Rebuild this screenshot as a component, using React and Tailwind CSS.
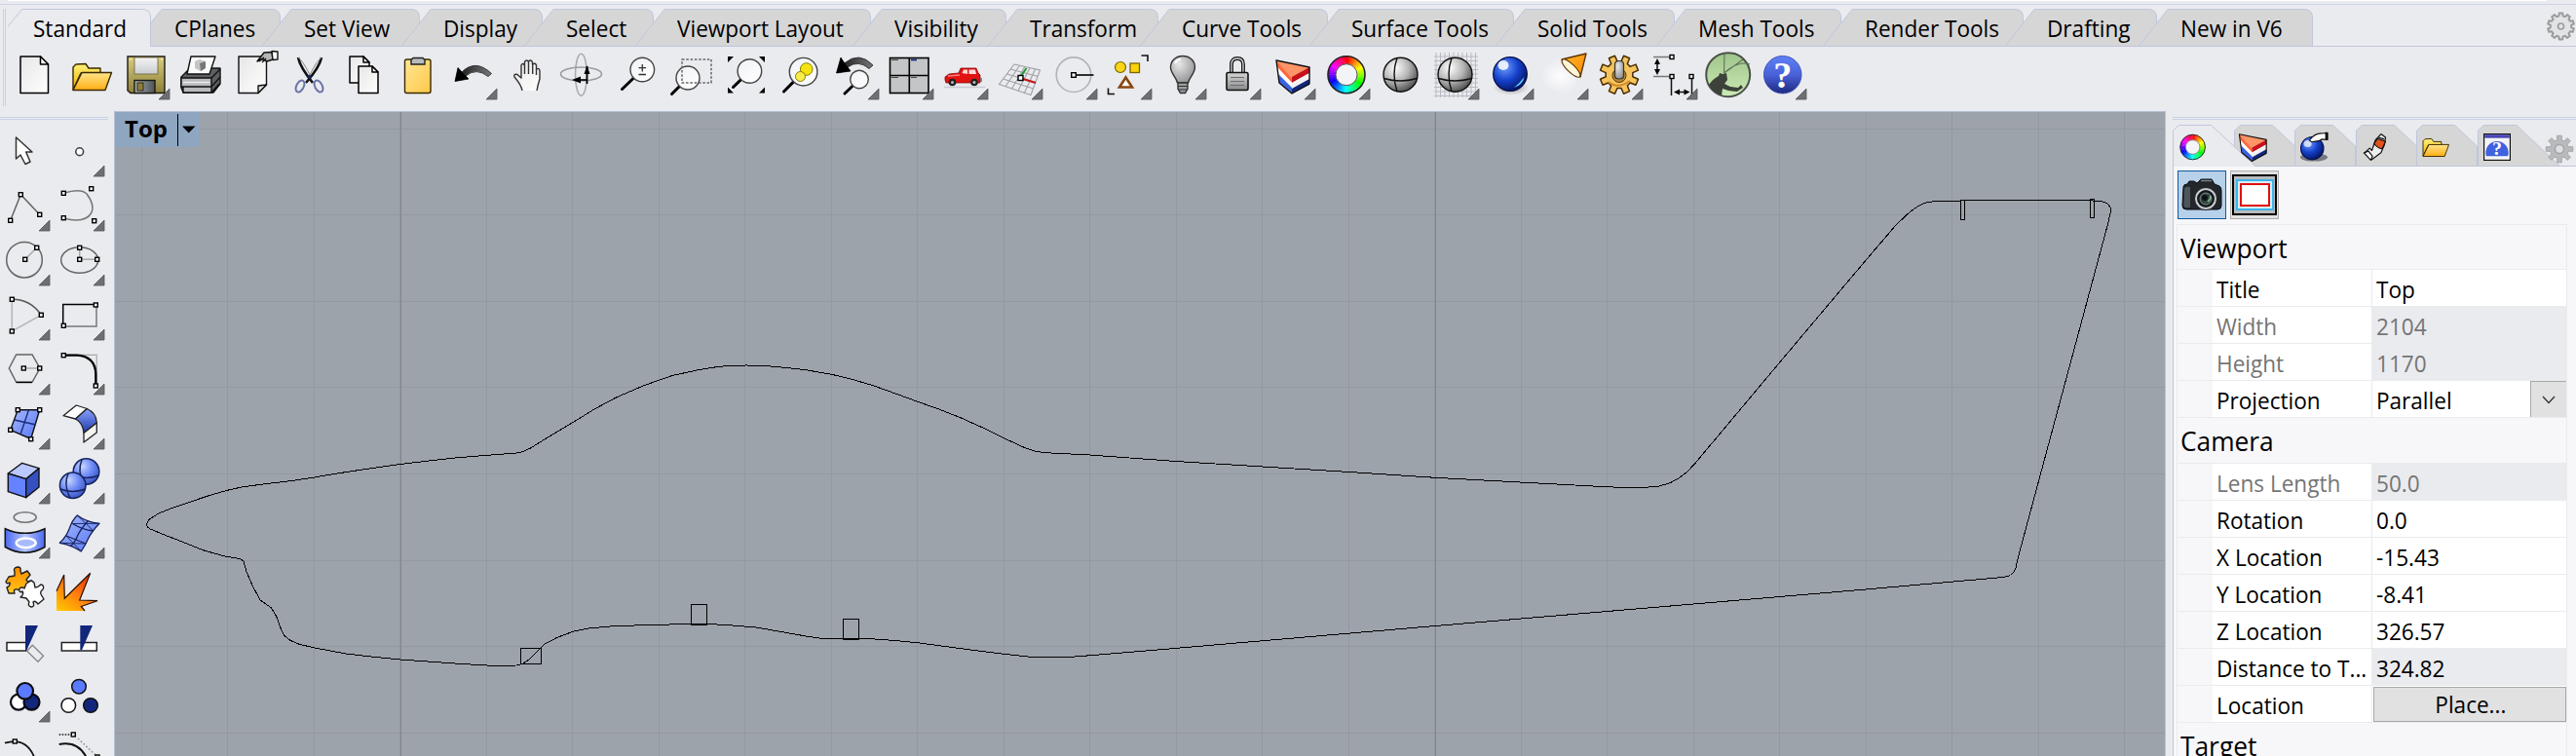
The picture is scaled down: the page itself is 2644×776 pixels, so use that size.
import React from "react";

/* ---------- shared drawing helpers ---------- */
const Sq = ({ x, y, s = 4 }) => (
  <rect x={x - s / 2} y={y - s / 2} width={s} height={s} fill="#fff" stroke="#000" strokeWidth="1.4" />
);

const Corner = () => <path d="M48 37V48H37Z" fill="#6f6f72" stroke="#55555a" strokeWidth=".8" />;

function Icon({ children, menu, className = "size-12" }) {
  return (
    <svg viewBox="0 0 48 48" className={`${className} shrink-0 overflow-visible`} fill="none">
      {children}
      {menu && <Corner />}
    </svg>
  );
}

function Wheel({ cx = 24, cy = 22.7, ro = 19, ri = 11 }) {
  const n = 48;
  const segs = [];
  for (let i = 0; i < n; i++) {
    const a = (i / n) * Math.PI * 2 - Math.PI / 2;
    const b = ((i + 1.15) / n) * Math.PI * 2 - Math.PI / 2;
    const p = (r, t) => `${cx + r * Math.cos(t)} ${cy + r * Math.sin(t)}`;
    segs.push(
      <path key={i} d={`M${p(ro, a)}L${p(ro, b)}L${p(ri, b)}L${p(ri, a)}Z`} fill={`hsl(${(i / n) * 360} 100% 50%)`} />
    );
  }
  return (
    <g>
      {segs}
      <circle cx={cx} cy={cy} r={ro} stroke="#222" strokeWidth="1.6" />
      <circle cx={cx} cy={cy} r={ri} fill="#f3f4f7" stroke="#555" strokeWidth="1" />
    </g>
  );
}

const Folder = () => (
  <g stroke="#3a2a00" strokeWidth="1.4" strokeLinejoin="round">
    <path d="M5 38V15L8 12L18 11.5L21 16H33V21H13Z" fill="url(#yel)" />
    <path d="M5 38.5L14 20.5H44.5L38 38.5Z" fill="url(#org)" />
  </g>
);

const Slab = () => (
  <g strokeLinejoin="round">
    <path d="M8 8L42 15L24 26Z" fill="#ff9466" />
    <path d="M8 8L24 26V31L9 15Z" fill="#ff6a3c" />
    <path d="M42 15L24 25V31L42 21Z" fill="#c8101c" />
    <path d="M9 15L24 31V36L10 22Z" fill="#fff" />
    <path d="M42 21L24 31V37L42 27Z" fill="#f2f2f2" />
    <path d="M10 22L24 36V42L11 31Z" fill="#3a63e0" />
    <path d="M42 27L24 37V42L42 33Z" fill="#12277c" />
    <path d="M8 8L42 15V32L24 42L11 31Z" stroke="#111" strokeWidth="1.4" />
  </g>
);

const Lens = ({ cx, cy, r, hx, hy }) => {
  const d = Math.hypot(hx - cx, hy - cy);
  const sx = cx + ((hx - cx) / d) * r;
  const sy = cy + ((hy - cy) / d) * r;
  return (
    <g>
      <path d={`M${sx} ${sy}L${hx} ${hy}`} stroke="#000" strokeWidth="3" strokeLinecap="round" />
      <circle cx={cx} cy={cy} r={r} fill="url(#glass)" stroke="#444" strokeWidth="1.4" />
    </g>
  );
};

const Page = ({ x, y, w, h, f = 8 }) => (
  <g stroke="#000" strokeWidth="1.5" strokeLinejoin="round">
    <path d={`M${x} ${y}H${x + w - f}L${x + w} ${y + f}V${y + h}H${x}Z`} fill="url(#paper)" />
    <path d={`M${x + w - f} ${y}V${y + f}H${x + w}Z`} fill="#fff" />
  </g>
);

const GreySphere = () => (
  <g stroke="#111" strokeWidth="1.4">
    <circle cx="23.5" cy="22.7" r="17.5" fill="url(#gsph)" />
    <path d="M6.500 26.500Q23 31.500 40.500 26.500M20 5.500Q14 22 20 40" />
  </g>
);

function gearPath(cx, cy, ro, ri, n) {
  let d = "";
  for (let i = 0; i < n; i++) {
    const c = (i / n) * Math.PI * 2 - Math.PI / 2;
    const st = Math.PI / n;
    [[ri, -0.62], [ro, -0.42], [ro, 0.42], [ri, 0.62]].forEach(([r, o], j) => {
      d += `${i === 0 && j === 0 ? "M" : "L"}${(cx + r * Math.cos(c + o * st)).toFixed(2)} ${(cy + r * Math.sin(c + o * st)).toFixed(2)}`;
    });
  }
  return d + "Z";
}

/* ---------- main toolbar ---------- */
const toolbar = [
  [<Page x={7} y={4} w={28.5} h={37.5} />, false],
  [<Folder />, false],
  [
    <g stroke="#1c1a10" strokeWidth="1.4">
      <path d="M5 4H43V41.500H8L5 39Z" fill="url(#olive)" />
      <rect x="12" y="5" width="24" height="17" fill="url(#steel)" strokeWidth=".8" stroke="#6b6330" />
      <rect x="12" y="28.500" width="21" height="13" fill="url(#steel2)" />
      <rect x="15" y="31" width="6" height="8" fill="#8c7f3c" strokeWidth=".8" />
      <path d="M7 7h2M39 7h2" stroke="#ffe98a" />
    </g>,
    true,
  ],
  [
    <g stroke="#111" strokeWidth="1.4" strokeLinejoin="round">
      <path d="M4 25L13 16H44V32L37 41H6L4 36Z" fill="#5d5f62" />
      <path d="M14 4L39 4L33 22L10 22Z" fill="#fafafa" />
      <path d="M18 9l5-2 6 2v7l-5 3-6-3z" fill="#c4c4c4" stroke="none" />
      <path d="M23 11l6-2v7l-5 3z" fill="#777" stroke="none" />
      <path d="M4 26H35V35H4ZM6 35H35V41H6Z" fill="#b9bbbd" />
      <path d="M35 26L44 17M35 35L44 25M35 41L43 32" />
      <path d="M6 30.500H33" stroke="#eee" />
    </g>,
    false,
  ],
  [
    <g stroke="#111" strokeWidth="1.4" strokeLinejoin="round">
      <path d="M7 4H35.500V33L27 41.500H7Z" fill="url(#paper)" />
      <path d="M27 41.500V34L35.500 33Z" fill="#ddd" />
      <path d="M26 9L33 0L41 -.5L42 7L36 9L31 6.500Z" fill="#b5b5b5" />
      <path d="M28 9l5-4M31 10l4-4" />
      <path d="M41 -1.500L47 -1V7L42 7.500Z" fill="#fff" />
    </g>,
    false,
  ],
  [
    <g>
      <path d="M12 5Q14 15 27 31M36 5Q34 15 20 31" stroke="#111" strokeWidth="2.600" />
      <path d="M12 5Q18 10 24 23M36 5Q30 10 24 23" stroke="#888" strokeWidth="1" />
      <ellipse cx="14" cy="34.500" rx="3.700" ry="6.500" transform="rotate(28 14 34.500)" stroke="#6c74a8" strokeWidth="2" />
      <ellipse cx="33" cy="34.500" rx="3.700" ry="6.500" transform="rotate(-28 33 34.500)" stroke="#6c74a8" strokeWidth="2" />
      <circle cx="23.500" cy="25" r="2" fill="#17245c" />
    </g>,
    false,
  ],
  [
    <g>
      <Page x={9} y={4} w={20} h={27} f={6} />
      <Page x={18} y={14} w={20} h={27.5} f={6} />
    </g>,
    false,
  ],
  [
    <g stroke="#3a2a00" strokeWidth="1.400">
      <rect x="9.500" y="7" width="26.500" height="34.500" rx="2" fill="url(#clip)" />
      <path d="M16 12V7.500L18 5.500H28L30 7.500V12Z" fill="#b9babd" stroke="#222" />
    </g>,
    false,
  ],
  [
    <g>
      <path d="M5 29.500L8 15.500L12 20Q26 6 42.500 21.500L39 24.500Q27 15 16 24L19 27Z" fill="url(#arw)" stroke="#222" strokeWidth=".8" />
      <path d="M5 29.500L8 15.500L19 27Z" fill="#000" />
    </g>,
    true,
  ],
  [
    <path
      d="M18 39Q17 33 10 25Q9 21.500 13 22.500L17 26V13Q18.500 10 20.500 13V9.500Q22.500 6.500 24.500 9.500V9Q27 6.500 28.500 10V12Q31.500 10 32.500 13V17Q35.500 15 36 19V27Q34 33 33 39"
      fill="url(#paper)"
      stroke="#333"
      strokeWidth="1.400"
      strokeLinejoin="round"
    />,
    false,
    <path d="M20.500 13V22M24.500 10V22M28.700 12V22M32.500 17V23" stroke="#333" strokeWidth="1.400" />,
  ],
  [
    <g>
      <ellipse cx="22.500" cy="22.700" rx="6" ry="21.500" stroke="#a9abb0" strokeWidth="1.600" />
      <ellipse cx="22.500" cy="22" rx="21" ry="7" stroke="#9a9ca0" strokeWidth="1.600" />
      <path d="M28.500 14V32" stroke="#000" strokeWidth="1.800" />
      <path d="M28.500 13L31.500 22H25.500ZM13 28L22 24.500V31.500Z" fill="#000" />
      <path d="M20 28H28" stroke="#000" strokeWidth="1.600" />
    </g>,
    false,
  ],
  [
    <g>
      <Lens cx={29.3} cy={17.5} r={12.3} hx={8.5} hy={37.5} />
      <path d="M29.300 12V19.500M25.500 15.700H33M25.500 22.500H33" stroke="#333" strokeWidth="1.300" />
    </g>,
    false,
  ],
  [
    <g>
      <Lens cx={20} cy={26} r={12} hx={3.5} hy={42.5} />
      <rect x="14" y="7" width="30" height="24" stroke="#666" strokeWidth="1.500" strokeDasharray="2.500 1.800" />
    </g>,
    false,
  ],
  [
    <g>
      <Lens cx={27.4} cy={19} r={12.3} hx={10.5} hy={35.5} />
      <path d="M5 4H11L5 10ZM43 4H37L43 10ZM5 41.500V35.500L11 41.500ZM43 41.500V35.500L37 41.500Z" fill="#000" />
    </g>,
    false,
  ],
  [
    <g>
      <Lens cx={26.6} cy={19.7} r={14.3} hx={6.5} hy={40} />
      <circle cx="29.700" cy="17" r="6.300" fill="#f3e410" stroke="#8a7d00" />
      <circle cx="23.500" cy="24.500" r="5" fill="#f7ee4a" stroke="#8a7d00" />
    </g>,
    false,
  ],
  [
    <g>
      <path d="M4.500 21L9 5L12.500 11Q28 -2 42 13L38 16.500Q27 7 16 15L19 19Z" fill="url(#arw)" stroke="#222" strokeWidth=".8" />
      <path d="M4.500 21L9 5L19 19Z" fill="#000" />
      <Lens cx={28} cy={27.5} r={9.3} hx={13} hy={42} />
    </g>,
    true,
  ],
  [
    <g stroke="#000" strokeWidth="1.600">
      <rect x="3.500" y="5.500" width="39.500" height="36" fill="#c4c5c7" />
      <path d="M23.300 5V42M3 23.500H43" />
      <path d="M5 7.500H12M5 25.500H12M25 25.500H31" strokeWidth="1.200" stroke="#444" />
      <path d="M25 7.500H31" stroke="#10207c" />
    </g>,
    true,
  ],
  [
    <g>
      <path d="M3 35.500H45" stroke="#c9cacd" strokeWidth="1.600" />
      <path d="M4 28V25L8 22L18 21L20 16H36L38 21L40 23V31H5Z" fill="#e01212" stroke="#8c0505" strokeWidth=".8" />
      <path d="M21.500 21L23 17.500H27V22ZM28.500 17.500H35L36 22H28.500Z" fill="#ffd9d9" />
      <path d="M7 24L19 23" stroke="#ff8080" strokeWidth="1.400" />
      <circle cx="11.500" cy="30.500" r="3.800" fill="#222" />
      <circle cx="11.500" cy="30.500" r="1.500" fill="#bbb" />
      <circle cx="34" cy="30.500" r="3.800" fill="#222" />
      <circle cx="34" cy="30.500" r="1.500" fill="#bbb" />
      <path d="M41 26V30" stroke="#666" strokeWidth="1.500" />
    </g>,
    true,
  ],
  [
    <g>
      <g stroke="#a0a1a5" strokeWidth="1.100">
        <path d="M19 12L45.500 18L36 43.500L3.500 32.500ZM15 17L43.500 24.500M11.500 22L41 30.500M7.500 27L38.700 37" />
        <path d="M24.500 13.200L10 34.700M29.800 14.500L16.500 37M35 15.700L23 39M40.500 17L29.500 41.200" />
      </g>
      <path d="M26 24L31.500 16" stroke="#159a2c" strokeWidth="2" />
      <path d="M28 27L41 31" stroke="#c21515" strokeWidth="2" />
      <Sq x={25.5} y={26} s={5} />
    </g>,
    true,
  ],
  [
    <g>
      <circle cx="24" cy="22.700" r="17.800" stroke="#b3b4b8" strokeWidth="1.600" />
      <path d="M24 23H44.500" stroke="#000" strokeWidth="1.600" />
      <Sq x={24} y={23} s={4.6} />
    </g>,
    true,
  ],
  [
    <g>
      <circle cx="16" cy="15" r="5.500" fill="#f9d616" stroke="#7a6400" strokeWidth="1.200" />
      <rect x="26" y="11" width="9.500" height="9.500" fill="#fbd20b" stroke="#7a6400" strokeWidth="1.300" />
      <path d="M21.500 25.500L28 35.500H15Z" stroke="#8a4610" strokeWidth="2.600" fill="#fff" />
      <path d="M37.500 3H44V9M3.500 36.500V42.500H10" stroke="#111" strokeWidth="1.600" />
    </g>,
    true,
  ],
  [
    <g stroke="#333" strokeWidth="1.400">
      <path d="M24 3.500C31 3.500 36.500 8.500 36.500 15C36.500 21 31 25 29.500 31H18.500C17 25 11.500 21 11.500 15C11.500 8.500 17 3.500 24 3.500Z" fill="url(#bulb)" />
      <path d="M19 31H29V37L26.500 41.500H21.500L19 37Z" fill="#9b9c9f" />
      <path d="M19 34.500H29M19.500 38H28.500" strokeWidth="1" />
      <path d="M16 11Q18 7 22 7" stroke="#fff" strokeWidth="2" />
    </g>,
    true,
  ],
  [
    <g stroke="#111" strokeWidth="1.600">
      <path d="M18 20V12Q18 6 24 6T30 12V20" strokeWidth="3.800" />
      <path d="M18 20V12Q18 6 24 6T30 12V20" stroke="#ddd" strokeWidth="1.300" />
      <rect x="13" y="20.500" width="22" height="18" rx="1.500" fill="url(#lockg)" />
      <path d="M17 25.500H31M17 29.500H31M17 33.500H31" stroke="#6b6c70" strokeWidth="1.200" />
    </g>,
    true,
  ],
  [<Slab />, true],
  [<Wheel />, true],
  [<GreySphere />, false],
  [
    <g>
      <path
        d="M2 4H47M2 8.500H47M2 13H47M2 17.500H47M2 22H47M2 26.500H47M2 31H47M2 35.500H47M2 40H47M2 44.500H47M4 0V46M8.500 0V46M13 0V46M17.500 0V46M22 0V46M26.500 0V46M31 0V46M35.500 0V46M40 0V46M44.500 0V46"
        stroke="#b9bac0"
        strokeWidth="1"
      />
      <GreySphere />
    </g>,
    true,
  ],
  [
    <g>
      <ellipse cx="25" cy="36" rx="19" ry="8" fill="url(#shade)" />
      <circle cx="24" cy="22" r="17.300" fill="url(#bsph)" stroke="#06104a" strokeWidth="1.300" />
      <ellipse cx="17" cy="13" rx="5.500" ry="5" fill="#fff" opacity=".85" />
      <path d="M28 36Q37 33 38.500 25Q34 31 28 36Z" fill="#5cd0ff" />
    </g>,
    true,
  ],
  [
    <g>
      <ellipse cx="20" cy="24" rx="20" ry="18" fill="url(#glow)" />
      <path d="M21 7L46 1L40 25Z" fill="url(#cone)" stroke="#5a3200" strokeWidth="1.300" strokeLinejoin="round" />
      <ellipse cx="30.500" cy="16" rx="12.500" ry="4" transform="rotate(44 30.500 16)" fill="#fff6d8" stroke="#5a3200" strokeWidth="1.100" />
    </g>,
    true,
  ],
  [
    <g>
      <path d={gearPath(24, 22.7, 20, 14, 8)} transform="rotate(22.5 24 22.7)" fill="#f5c45c" stroke="#4a2c00" strokeWidth="1.500" strokeLinejoin="round" />
      <path d="M13 30Q22 38 35 29" stroke="#cf8a2a" strokeWidth="2" />
      <circle cx="24" cy="23.500" r="7" fill="#b7873a" stroke="#5a3a00" />
      <path d="M19.500 12Q19.500 8.500 24 8.500T28.500 12V24Q28.500 27 24 27T19.500 24Z" fill="url(#bulb)" stroke="#333" strokeWidth="1.200" />
    </g>,
    true,
  ],
  [
    <g stroke="#111" strokeWidth="1.500">
      <path d="M3 4.500H20M3 24.500H20" stroke="#777" />
      <path d="M7 9V20M21.500 27V44M42.500 27V44M27 40.500H37" />
      <path d="M7 6L10 12H4ZM7 23L10 17H4ZM24 40.500L30 37.500V43.500ZM40.500 40.500L34.500 37.500V43.500Z" fill="#000" stroke="none" />
      <Sq x={22} y={4.5} />
      <Sq x={22} y={24.5} />
      <Sq x={42} y={24.5} />
    </g>,
    true,
  ],
  [
    <g>
      <circle cx="23.700" cy="22.700" r="22.500" fill="url(#green)" stroke="#4b5148" strokeWidth="2" />
      <path d="M20 .5L19.500 21M19.500 21Q34 8 46 12M19.500 21L39 7" stroke="#5d7157" strokeWidth="1.100" />
      <path d="M4 33Q8 27 14 24L15 21L18 22L22 21L23 28L20 32L26 35L34 36L37 33L39 36L33 40L24 39L18 37L17 44Q8 41 4 33Z" fill="#3c423a" />
    </g>,
    false,
  ],
  [
    <g>
      <circle cx="23.700" cy="22.700" r="19.300" fill="url(#help)" stroke="#3346ae" strokeWidth=".8" />
      <text x="23.700" y="35.500" textAnchor="middle" fontFamily="Liberation Serif, serif" fontWeight="700" fontSize="38" fill="#fff">?</text>
    </g>,
    true,
  ],
];

/* ---------- side toolbar ---------- */
const side = [
  [<path d="M13.500 8L30 23H23.700L28 33L23 35.500L18 26L13.500 30Z" fill="#fff" stroke="#333" strokeWidth="1.500" strokeLinejoin="round" />, false],
  [<circle cx="22.700" cy="22.700" r="3.900" stroke="#444" strokeWidth="1.600" fill="#fff" />, true],
  [
    <g>
      <path d="M7.700 37.300L18.300 10.700L37.700 31.300" stroke="#666" strokeWidth="1.500" />
      <Sq x={7.7} y={37.3} /><Sq x={18.3} y={10.7} /><Sq x={37.7} y={31.3} />
    </g>,
    true,
  ],
  [
    <g>
      <path d="M6.300 9.300Q24 4 30 10Q39 22 34.500 30Q28 40.500 6.300 35" stroke="#777" strokeWidth="1.500" />
      <Sq x={6.3} y={9.3} /><Sq x={34.7} y={4.7} /><Sq x={37.7} y={37.7} /><Sq x={6.3} y={34.7} />
    </g>,
    true,
  ],
  [
    <g>
      <circle cx="22" cy="21.700" r="18.300" stroke="#666" strokeWidth="1.500" />
      <path d="M22.700 21.300L34.700 9.300" stroke="#aaa" strokeWidth="1.500" />
      <Sq x={22.7} y={21.3} /><Sq x={34.7} y={9.3} />
    </g>,
    true,
  ],
  [
    <g>
      <ellipse cx="22.700" cy="22" rx="19" ry="13.300" stroke="#666" strokeWidth="1.500" />
      <path d="M22.700 9.300V21.300H40.700" stroke="#aaa" strokeWidth="1.500" />
      <Sq x={22.7} y={21.3} /><Sq x={22.7} y={9.3} /><Sq x={40.7} y={21.3} />
    </g>,
    true,
  ],
  [
    <g>
      <path d="M9.300 6.300V39L39.300 22.300" stroke="#b5b5b8" strokeWidth="1.500" />
      <path d="M9.300 6.300Q28 6 39.300 22.300" stroke="#555" strokeWidth="1.500" />
      <Sq x={9.3} y={6.3} /><Sq x={9.3} y={39} /><Sq x={39.3} y={22.3} />
    </g>,
    true,
  ],
  [
    <g>
      <path d="M5.700 33V11.500H39" stroke="#000" strokeWidth="1.500" />
      <path d="M6 34H40V12" stroke="#77777c" strokeWidth="1.500" />
      <Sq x={39.3} y={12} /><Sq x={6.3} y={33.3} />
    </g>,
    true,
  ],
  [
    <g>
      <path d="M6.300 21L13.700 7H30L38 21L30 35.300H13.700Z" stroke="#666" strokeWidth="1.500" />
      <path d="M13.700 35.500H30" stroke="#000" strokeWidth="1.400" />
      <path d="M21.300 21H37.700" stroke="#aaa" strokeWidth="1.500" />
      <Sq x={21.3} y={21} /><Sq x={37.7} y={21} />
    </g>,
    true,
  ],
  [
    <g>
      <path d="M6.300 7.300H40.300V39" stroke="#aaa" strokeWidth="1.200" />
      <path d="M6.300 7.700H20Q39 9 39.300 27V39" stroke="#000" strokeWidth="2.300" />
      <Sq x={6.3} y={7.7} /><Sq x={39.3} y={39} />
    </g>,
    true,
  ],
  [
    <g>
      <path d="M15.300 7.700H37.700L28.700 37.500L7.700 28.300Z" fill="url(#blue)" stroke="#111" strokeWidth="1.400" />
      <path d="M26.500 7.700L18 33M11.500 18L34 23" stroke="#1c2c7c" strokeWidth="1.400" />
      <Sq x={15.3} y={7.7} /><Sq x={37.7} y={7.7} /><Sq x={28.7} y={37.7} /><Sq x={7.7} y={28.3} />
    </g>,
    true,
  ],
  [
    <g stroke="#222" strokeWidth="1.300" strokeLinejoin="round">
      <path d="M6 13.700L19.300 3L30.300 6.500L18.500 17Z" fill="#fff" />
      <path d="M30.300 6.500Q40 11 40.300 21L27 31.500Q26 21 18.500 17Z" fill="url(#blue2)" />
      <path d="M40.300 21V31L27 41V31.500Z" fill="#f3f3f0" />
    </g>,
    true,
  ],
  [
    <g stroke="#111" strokeWidth="1.400" strokeLinejoin="round">
      <path d="M19.700 6.300L37 11.700L23.700 22.700L5.300 17Z" fill="#b9c8ff" />
      <path d="M5.300 17L23.700 22.700V41.700L5.300 35.700Z" fill="#6582ff" />
      <path d="M37 11.700V31L23.700 41.700V22.700Z" fill="#3550c0" />
    </g>,
    true,
  ],
  [
    <g stroke="#15245e" strokeWidth="1.500">
      <circle cx="29.500" cy="15" r="13.300" fill="url(#sph)" />
      <path d="M17 19Q30 24 42.500 19M25 3Q20 15 27 28" />
      <circle cx="15.700" cy="29.300" r="13.300" fill="url(#sph)" />
      <path d="M3 33Q15 38 28.500 33M11 17Q6 29 13 42" />
    </g>,
    true,
  ],
  [
    <g>
      <ellipse cx="22.700" cy="6" rx="11.500" ry="5.300" stroke="#777" strokeWidth="1.600" />
      <path d="M2.300 17.700Q22.700 27 43 17.700V36.500Q22.700 48 2.300 36.500Z" fill="url(#band)" stroke="#111" strokeWidth="1.500" />
      <ellipse cx="23.700" cy="32.300" rx="10" ry="4.800" fill="#a8bbff" stroke="#fff" strokeWidth="2.400" />
    </g>,
    true,
  ],
  [
    <g stroke="#16225e" strokeWidth="1.300" strokeLinejoin="round">
      <path d="M20.300 4Q30 11 43 12.300Q35 21 32 27Q29 34 24.300 41Q14 34 2.300 32.300Q9 26 12 18Q15 9 20.300 4Z" fill="url(#blue)" />
      <path d="M31.500 9.500Q24 18 21 24Q18 32 13 36M15.500 12.500Q26 19 37 20M9 25Q19 29 29 33" />
      <path d="M20.300 4L37 20M15.500 12.500L43 12.300M9 25L24.300 41M2.300 32.300L29 33" strokeWidth=".9" />
    </g>,
    true,
  ],
  [
    <g strokeWidth="1.400" stroke="#222" strokeLinejoin="round">
      <path
        d="M12 6Q10 2 15 1Q19 1 18 5L19 8L25 5L28 9L24 14Q25 17 28 15Q32 15 31 19Q29 22 26 20L23 22L20 27L15 24Q10 23 12 28L6 28L4 22Q8 20 7 17Q4 19 3 16L6 11L12 10Z"
        fill="url(#org2)"
      />
      <path
        d="M24 18L29 15L32 17L33 22Q36 22 39 19Q43 20 41 24Q38 26 39 29L42 34L36 39Q33 35 31 37Q33 42 29 42Q25 41 27 37L24 33L18 32Q22 29 20 26Q16 28 17 23Q20 21 22 23Z"
        fill="#fff"
      />
    </g>,
    false,
  ],
  [<path d="M-1 46V25.700L6.700 9L7.300 33.300L33.700 7.300L22.700 35L41 35.700L24.300 41.500L28 46Z" fill="url(#fire)" />, false,
    <path d="M-1 25.700L6.700 9L7.300 33.300L33.700 7.300L22.700 35L41 35.700L24.300 41.500L28 46" stroke="#2a1200" strokeWidth="1.200" />],
  [
    <g>
      <rect x="4" y="22.500" width="20" height="8.500" fill="#fff" stroke="#222" strokeWidth="1.500" />
      <path d="M23 5H36L24.500 30H23Z" fill="#12277c" />
      <path d="M30.300 25.300L41.500 36.300L36 42.300L24.700 31.300Z" stroke="#888" strokeWidth="1.400" fill="#eaebef" />
    </g>,
    false,
  ],
  [
    <g>
      <rect x="4.300" y="22.500" width="36" height="8.500" fill="#fff" stroke="#222" strokeWidth="1.500" />
      <path d="M23.300 5H36L25 30.300H23.300Z" fill="#12277c" />
    </g>,
    false,
  ],
  [
    <g stroke="#0a0a14" strokeWidth="2.200">
      <circle cx="16" cy="27.700" r="8" fill="#fff" />
      <circle cx="29.500" cy="27.700" r="8" fill="#12277c" />
      <circle cx="22.700" cy="16.300" r="8.300" fill="#5a7aff" />
    </g>,
    true,
  ],
  [
    <g stroke="#111" strokeWidth="1.500">
      <circle cx="22" cy="11.700" r="7.300" fill="#5a7aff" />
      <circle cx="11.300" cy="31" r="7.300" fill="#fff" />
      <circle cx="34" cy="31" r="7.300" fill="#12277c" />
    </g>,
    false,
  ],
  [
    <g>
      <path d="M2 13.700Q24 7 32.500 29" stroke="#111" strokeWidth="1.800" />
      <Sq x={12.3} y={12} />
    </g>,
    false,
  ],
  [
    <g>
      <path d="M1.700 15Q21 11 30 29" stroke="#111" strokeWidth="2" />
      <path d="M1.700 5H14" stroke="#111" strokeWidth="1.500" strokeDasharray="1.500 1.500" />
      <path d="M21 9L39 26" stroke="#999" strokeWidth="1.600" strokeDasharray="1.800 2" />
      <Sq x={16.3} y={5} /><Sq x={41} y={28} />
    </g>,
    false,
  ],
];

function Defs() {
  const g = (id, stops, x2 = 0, y2 = 1) => (
    <linearGradient id={id} x1="0" y1="0" x2={x2} y2={y2}>
      {stops.map((c, i) => <stop key={i} offset={i / (stops.length - 1)} stopColor={c} />)}
    </linearGradient>
  );
  const r = (id, stops) => (
    <radialGradient id={id} cx=".35" cy=".3" r=".8">
      {stops.map((c, i) => <stop key={i} offset={i / (stops.length - 1)} stopColor={c} />)}
    </radialGradient>
  );
  return (
    <svg className="absolute size-0" aria-hidden="true">
      <defs>
        {g("paper", ["#e6e6e6", "#ffffff"], 1, 1)}
        {g("yel", ["#fff07a", "#f0b400"])}
        {g("org", ["#ffe58a", "#ffae14"])}
        {g("org2", ["#ff8a00", "#ffc61a"])}
        {g("olive", ["#d9cc83", "#8d8038"])}
        {g("steel", ["#f4f4f4", "#c8cccf"])}
        {g("steel2", ["#aab0b4", "#4c5256"], 1, 0)}
        {g("clip", ["#ffe793", "#ffc84a"], 1, 1)}
        {g("arw", ["#111", "#777"], 1, 0)}
        {g("glass", ["#f1f2f5", "#ffffff"], 1, 1)}
        {r("gsph", ["#fff", "#b4b4b4", "#3c3c3c"])}
        {r("bsph", ["#6f9cff", "#1340c8", "#030c50"])}
        {r("bulb", ["#e8e8e8", "#8c8c8f"])}
        {g("lockg", ["#d5d5d5", "#8a8a8c"])}
        {g("cone", ["#ffb62e", "#ff8a00"], 1, 1)}
        {g("green", ["#9ec48a", "#cdeab6"])}
        {g("help", ["#5f82f5", "#4a61d8", "#1c2a80"])}
        {g("blue", ["#a8bbff", "#5574f2"], 1, 1)}
        {g("blue2", ["#8aa3ff", "#1f39a8"], 0, 1)}
        {r("sph", ["#c8d5ff", "#6b88f5", "#304bb8"])}
        {g("band", ["#4c6af0", "#b5c5ff", "#4c6af0"], 1, 0)}
        <linearGradient id="fire" x1=".8" y1="0" x2=".1" y2="1">
          <stop offset="0" stopColor="#e82a0a" />
          <stop offset=".5" stopColor="#ff7a10" />
          <stop offset="1" stopColor="#ffc400" />
        </linearGradient>
        <radialGradient id="shade">
          <stop offset="0" stopColor="#555" stopOpacity=".8" />
          <stop offset="1" stopColor="#aaa" stopOpacity="0" />
        </radialGradient>
        <radialGradient id="glow">
          <stop offset="0" stopColor="#fff" stopOpacity=".9" />
          <stop offset="1" stopColor="#fff" stopOpacity="0" />
        </radialGradient>
      </defs>
    </svg>
  );
}

/* ---------- text with the narrow UI set ---------- */
const T = ({ children, className = "" }) => (
  <span className={`inline-block origin-left scale-x-[.94] whitespace-pre ${className}`}>{children}</span>
);

/* ---------- tab strip ---------- */
const tabs = [
  ["CPlanes", 152], ["Set View", 162], ["Display", 145], ["Select", 133], ["Viewport Layout", 242],
  ["Visibility", 158], ["Transform", 175], ["Curve Tools", 193], ["Surface Tools", 210], ["Solid Tools", 184],
  ["Mesh Tools", 190], ["Render Tools", 206], ["Drafting", 156], ["New in V6", 179],
];

function TabStrip() {
  return (
    <div className="relative flex h-[39px] shrink-0 pl-2">
      <div className="absolute right-0 bottom-0 left-[154px] h-px bg-[#c0c6dc]" />
      <div className="relative z-10 h-[39px] w-[147px] shrink-0 pt-[2px] pl-[26px] text-2xl leading-9">
        <svg className="absolute inset-0" width="147" height="39">
          <path d="M-17 39.500L14.500 .5H138Q146.500 .5 146.500 9V39.500Z" fill="#eaebef" stroke="#c0c6dc" />
        </svg>
        <T className="relative">Standard</T>
      </div>
      {tabs.map(([name, w]) => (
        <div key={name} className="relative -ml-[19px] h-[39px] shrink-0 pt-[2px] pl-[43px] text-2xl leading-9" style={{ width: w }}>
          <svg className="absolute inset-0" width={w} height="39">
            <path d={`M0 38.500L30 .5H${w - 9}Q${w - 0.5} .5 ${w - 0.5} 9V38.500Z`} fill="#d6d6d6" stroke="#c0c6dc" />
          </svg>
          <T className="relative">{name}</T>
        </div>
      ))}
      <svg className="absolute top-[3px] right-0 size-[30px]" viewBox="0 0 30 30" fill="none">
        <path d={gearPath(14.5, 15, 13.5, 10.8, 10)} stroke="#9a9b9c" strokeWidth="2" fill="#e2e3e5" strokeLinejoin="round" />
        <circle cx="14.500" cy="15" r="3" stroke="#9a9b9c" strokeWidth="1.600" />
      </svg>
    </div>
  );
}

/* ---------- viewport ---------- */
const outline =
  "150.400,538 151.500,535.500 154,532.500 163.800,526.500 178,521 195.700,515 215,508.500 234.600,503 248,500 272,496.700 299.600,493.500 322.600,490 348,485.700 374,481.700 411,476.500 440,473 470,469.700 500,467.300 524,465.500 531,464.900 537,463.500 544.500,460 559,451 588.500,433.300 610,420 632.500,408 659,396.500 674,391 690,385.500 715.400,380 737.800,376.300 752,375.200 766.500,375 782,375.400 795,376.300 812,378 827,379.700 854.500,384.500 875,389.500 897,396 920,404.300 942.500,412.500 965,420.500 986.500,429 1012,440.500 1031,450 1053.400,460.300 1062,463 1072.700,464.700 1118.600,467 1207,473.500 1296,479 1385,484.500 1473,490.300 1560,495 1635,499 1662,500.300 1688.800,500.300 1703,499 1714.600,495.500 1723,491 1731,485 1739.500,476 1827.500,371 1916.300,265.700 1946,231 1959.500,218.300 1969,211.300 1976.700,208 1986.300,206.500 2012.500,206.500 2012.500,205.500 2145.500,205.500 2150,206.500 2157,206.500 2162.700,208.700 2166,212.700 2166.500,217 2163.500,230 2093.500,490 2071.400,572 2069,583 2067,587 2063.500,590.500 2056,592.500 1915,605 1473,642.500 1208,665.300 1119.400,672.700 1099.500,674.300 1076.500,675 1057.400,674.300 1030.600,671.300 1000,667.500 970,663.500 941.800,659.700 916.300,657.300 891,655.500 843,655.300 827,653 802,648.500 776,644 744,641.300 717.300,640.300 674,641.300 629.300,642.700 603.800,645 588,648.300 572,654.300 559,661 554,666 543.200,677 537,681 530.500,683 505,683.300 466.700,681 411,677 380.600,674 355,671 323,665 307.300,661.300 297.700,657.300 291.300,652 287.500,643.300 283.700,632.700 278.600,624 267,616 259.400,601.700 253,586.700 250,576 246,573.500 230.700,571 208.400,564.700 189.300,557 170,549.500 154.200,543 151.500,541";

const rowsY = [132.5, 220.5, 309.5, 397.5, 486.5, 575.5, 663.5, 752.5];
const colsX = Array.from({ length: 24 }, (_, i) => Math.floor(145.4 + i * 88.5) + 0.5);

function Viewport() {
  return (
    <main className="relative w-[2106px] shrink-0 border border-b-0 border-[#b7c1d6] bg-[#9da3ab]">
      <svg className="absolute inset-0" width="2104" height="661" viewBox="118 115 2104 661" fill="none" shapeRendering="crispEdges">
        {colsX.map((x) => <path key={x} d={`M${x} 115V776`} stroke="#92999f" />)}
        {rowsY.map((y) => <path key={y} d={`M118 ${y}H2222`} stroke="#92999f" />)}
        <path d="M411.500 115V776M1473.500 115V776" stroke="#83858c" />
        <g stroke="#000" strokeWidth="1">
          <polygon points={outline} />
          <rect x="534.500" y="665.500" width="21" height="16" />
          <rect x="709.500" y="620.500" width="16" height="21" />
          <rect x="865.500" y="635.500" width="16" height="21" />
          <rect x="2012.500" y="205.500" width="4" height="20" />
          <rect x="2145.500" y="204.500" width="4" height="19" />
        </g>
      </svg>
      <div className="relative flex h-9 w-[87px] items-center rounded-br bg-[#8fa6c1] pl-[10px] text-2xl font-bold">
        <span className="w-[44px] pb-[2px] leading-[34px]">Top</span>
        <span className="ml-[10px] h-[33px] w-px bg-black" />
        <svg className="ml-[4px]" width="14" height="8"><path d="M0 .5H13.500L6.700 7.500Z" fill="#000" /></svg>
      </div>
    </main>
  );
}

/* ---------- properties panel ---------- */
const panelIcons = [
  <Wheel cx={25} cy={24} ro={22} ri={12.5} />,
  <g transform="translate(-10.500 -10) scale(1.400)"><Slab /></g>,
  <g>
    <ellipse cx="24" cy="42" rx="24" ry="7" fill="#777a80" />
    <circle cx="21" cy="26" r="20" fill="url(#bsph)" stroke="#06104a" strokeWidth="2" />
    <ellipse cx="13" cy="18" rx="7" ry="6" fill="#fff" opacity=".7" />
    <path d="M16 12Q26 -1 38 0L46 -1V11L38 10Q34 14 26 14L20 15Z" fill="#fff" stroke="#111" strokeWidth="2" />
    <path d="M44 -2H49V12H44Z" fill="#000" />
  </g>,
  <g strokeLinejoin="round" stroke="#111" strokeWidth="2">
    <path d="M5 34L14 26L18 30L24 12L34 1L42 7L40 20L34 34L18 46Z" fill="#eee" />
    <path d="M22 18L28 9L42 14L36 27Q28 26 22 18Z" fill="#e2521a" />
    <path d="M4 34L12 31L19 40L16 47Z" fill="#fff" />
    <path d="M30 7L40 10" />
  </g>,
  <g transform="translate(-4 -4) scale(1.150)"><Folder /></g>,
  <g>
    <rect x="1" y="1" width="46" height="46" fill="#f4f4f6" stroke="#111" strokeWidth="2" />
    <rect x="2" y="2" width="44" height="6" fill="#4a46b4" />
    <path d="M5 40A20 20 0 1 1 43 40Z" fill="#3f62e0" />
    <text x="24" y="38" textAnchor="middle" fontFamily="Liberation Serif, serif" fontWeight="700" fontSize="34" fill="#fff">?</text>
  </g>,
];

function PanelTabs() {
  return (
    <div className="relative flex h-[43px]">
      <div className="absolute right-0 bottom-0 left-0 h-px bg-[#c0c6dc]" />
      {panelIcons.map((icon, i) => (
        <div key={i} className={`relative h-[43px] w-[62.500px] shrink-0 pt-[9px] pl-[6px] ${i === 0 ? "z-10" : ""}`}>
          <svg className="absolute top-0 left-0 overflow-visible" width="86" height="43" fill="none">
            {i === 0 ? (
              <path d="M.5 43V6L6.500 .5H39.500L85 43Z" fill="#eaebef" />
            ) : (
              <path d={i === 5 ? "M.5 42.500V6L6.500 .5H40L84.500 42.500Z" : "M.5 42.500V6L6.500 .5H39.500L62.500 22V42.500Z"} fill="#d6d6d6" stroke="#c0c6dc" />
            )}
            {i === 0 && <path d="M.5 43V6L6.500 .5H39.500L85 42.500" stroke="#c0c6dc" />}
          </svg>
          <Icon className={i === 1 ? "relative z-20 size-7 -left-px" : "relative size-7"}>{icon}</Icon>
        </div>
      ))}
      <svg className="absolute top-[10px] right-[2px] size-[30px]" viewBox="0 0 30 30">
        <path d={gearPath(15, 15, 14, 9.5, 8)} fill="#b9babc" stroke="#a6a7aa" strokeWidth="1" />
        <circle cx="15" cy="15" r="4.500" fill="#dfe0e3" stroke="#a3a4a6" strokeWidth="1.500" />
      </svg>
    </div>
  );
}

function Row({ label, value, dim, grey, select, button }) {
  return (
    <div className={`flex h-[38px] border-b border-[#eaebef] text-2xl leading-[39px] ${dim ? "text-[#757575]" : "text-black"}`}>
      <div className="w-9 shrink-0" />
      <div className="w-[163px] shrink-0 overflow-hidden bg-white pl-1">
        <T>{label}</T>
      </div>
      <div className={`flex flex-1 border-l border-[#eaebef] ${grey ? "-mb-px bg-[#eaebef]" : "bg-white"}`}>
        {button ? (
          <button className="mt-px ml-px h-9 flex-1 border border-[#a8a8a8] bg-[#e1e1e1] pl-px text-center leading-[34px]">
            <span className="inline-block scale-x-[.94]">{value}</span>
          </button>
        ) : (
          <span className="flex-1 pl-[4px]"><T>{value}</T></span>
        )}
        {select && (
          <span className="flex w-[37px] items-center justify-center border-t border-l border-[#a8a8a8] bg-[#e1e1e1]">
            <svg width="14" height="9" fill="none"><path d="M1 1L7 7.500L13 1" stroke="#333" strokeWidth="1.300" /></svg>
          </span>
        )}
      </div>
    </div>
  );
}

const Heading = ({ children, className }) => (
  <div className={`border-b border-[#eaebef] pl-[3px] text-[28px] ${className}`}><T>{children}</T></div>
);

function Camera() {
  return (
    <svg width="42" height="34" viewBox="0 0 42 34" fill="none">
      <path d="M2 9Q2 6 6 6L8 3H13L16 5L20 1H31L34 6L39 8Q41 9 41 13V28Q41 32 37 32H5Q1 32 1 28Z" fill="#23262a" stroke="#0c0e10" />
      <path d="M3 10Q5 8 9 9V30H4Q2 29 2.500 26Z" fill="#4e555b" />
      <path d="M20 2.500H31" stroke="#7d858b" strokeWidth="1.400" />
      <circle cx="25" cy="21" r="11.500" fill="#c9ced1" stroke="#1a1c1e" />
      <circle cx="25" cy="21" r="9" fill="#14181b" />
      <circle cx="25" cy="21" r="6" fill="#33483d" stroke="#7c8a8c" />
      <circle cx="24" cy="20" r="3" fill="#0c1013" />
      <path d="M27 24Q30 22 30 18" stroke="#8fb79a" strokeWidth="1.500" />
    </svg>
  );
}

function Panel() {
  return (
    <aside className="flex min-w-0 flex-1 flex-col pl-[7px] pt-[6px]">
      <div className="h-[3px] shrink-0 border-y border-[#c9d2e6]" />
      <div className="flex flex-1 flex-col pt-[5px]">
        <PanelTabs />
        <div className="flex-1 border-l border-[#c0c6dc] bg-[#f7f7f9] pt-1 pl-[3px]">
          <div className="flex gap-1 pl-px">
            <div className="flex size-[50px] items-center justify-center border border-[#13599c] bg-[#b7d1ea]"><Camera /></div>
            <div className="size-[50px] border border-[#adadad] bg-[#e1e1e1] px-px py-[3px]">
              <svg width="46" height="42" fill="none">
                <rect x="1" y="1" width="44" height="40" fill="#b9babd" stroke="#000" strokeWidth="2" />
                <rect x="5" y="6" width="37" height="30" fill="#d8eefa" stroke="#3db4ea" strokeWidth="2" />
                <rect x="9" y="10" width="29" height="22" fill="#fff" stroke="#e01010" strokeWidth="2" />
              </svg>
            </div>
          </div>
          <div className="mt-[5px] w-[401px] border border-b-0 border-[#eaebef]">
            <Heading className="h-[46px] leading-[46px]">Viewport</Heading>
            <Row label="Title" value="Top" />
            <Row label="Width" value="2104" dim grey />
            <Row label="Height" value="1170" dim grey />
            <Row label="Projection" value="Parallel" select />
            <Heading className="h-[47px] leading-[47px]">Camera</Heading>
            <Row label="Lens Length" value="50.0" dim grey />
            <Row label="Rotation" value="0.0" />
            <Row label="X Location" value="-15.43" />
            <Row label="Y Location" value="-8.41" />
            <Row label="Z Location" value="326.57" />
            <Row label="Distance to T..." value="324.82" grey />
            <Row label="Location" value="Place..." button />
            <Heading className="h-[47px] leading-[47px]">Target</Heading>
          </div>
        </div>
      </div>
    </aside>
  );
}

export default function App() {
  return (
    <div className="relative flex h-[776px] w-[2644px] flex-col overflow-hidden bg-[#eaebef] font-['Open_Sans','Noto_Sans',sans-serif] text-black">
      <Defs />
      <div className="h-[9px] shrink-0">
        <div className="mr-[30px] ml-2 h-px bg-white" />
        <div className="mt-[3px] h-px bg-[#cdd5e6]" />
      </div>
      <div className="absolute top-[9px] left-[3px] z-20 h-[100px] w-[3px] border-x border-[#c9d2e6]" />
      <TabStrip />
      <div className="flex h-[66px] shrink-0 gap-2 pt-[6px] pl-[14px]">
        {toolbar.map(([art, menu, over], i) => (
          <Icon key={i} menu={menu}>{art}{over}</Icon>
        ))}
      </div>
      <div className="flex min-h-0 flex-1">
        <nav className="w-[117px] shrink-0 pt-[6px]">
          <div className="h-[3px] w-[111px] border-y border-[#c9d2e6]" />
          <div className="grid grid-cols-[48px_48px] gap-2 pt-[10px] pl-[3px]">
            {side.map(([art, menu, over], i) => (
              <Icon key={i} menu={menu}>{art}{over}</Icon>
            ))}
          </div>
        </nav>
        <Viewport />
        <Panel />
      </div>
    </div>
  );
}
